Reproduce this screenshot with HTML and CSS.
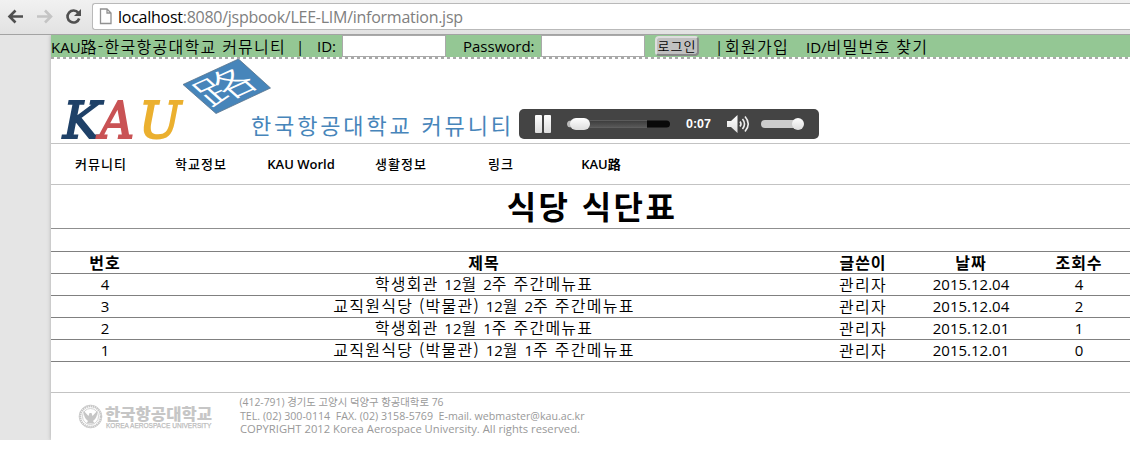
FILE: index.html
```html
<!DOCTYPE html>
<html lang="ko">
<head>
<meta charset="utf-8">
<title>KAU路</title>
<link rel="stylesheet" href="styles.css">
</head>
<body>
<div class="chrome">
  <svg class="chrome-icons" width="92" height="34" viewBox="0 0 92 34">
    <g fill="none" stroke-width="2.6">
      <path d="M23 16.5H10M15.5 10.5L9.5 16.5L15.5 22.5" stroke="#505050"/>
      <path d="M37 16.500H50M45 10.500L51 16.500L45 22.500" stroke="#c4c4c4"/>
      <path d="M78.300 12.900A6 6 0 1 0 79.200 18.500" stroke="#505050"/>
    </g>
    <path d="M81 9V16H74z" fill="#505050"/>
  </svg>
  <div class="omnibox">
    <svg width="14" height="17" viewBox="0 0 14 17"><path d="M1.500 1H8L12 5V15.500H1.500zM8 1V5H12" fill="#fdfdfd" stroke="#919191" stroke-width="1.300"/></svg>
    <span class="url"><b>localhost</b>:8080/jspbook/LEE-LIM/information.jsp</span>
  </div>
</div>
<div class="viewport">
  <div class="page">
    <div class="login">
      <span>KAU<i class="ko">路-한국항공대학교 커뮤니티</i></span>
      <span>|</span><span>ID:</span><input type="text">
      <span>Password:</span><input type="password">
      <button class="ko">로그인</button>
      <span>|</span><span class="ko">회원가입</span><span>ID/<i class="ko">비밀번호 찾기</i></span>
    </div>
    <header class="banner">
      <svg class="logo" width="468" height="84" viewBox="51 59 468 84">
        <g class="kau">
          <text x="63" y="138" textLength="38" lengthAdjust="spacingAndGlyphs" fill="#1f4168" stroke="#1f4168">K</text>
          <text x="100" y="138" textLength="34" lengthAdjust="spacingAndGlyphs" fill="#c95355" stroke="#c95355">A</text>
          <text x="139" y="138" textLength="42" lengthAdjust="spacingAndGlyphs" fill="#ebb02f" stroke="#ebb02f">U</text>
        </g>
        <path d="M183 84.500L238.500 59L270.500 88L216 113.500z" fill="#4785ba" stroke="#59748c" stroke-width=".8"/>
        <text class="road" transform="matrix(1.25 -.568 .74 .66 180 84.500)" x="2" y="37.500">路</text>
        <text class="tagline" x="251" y="134" textLength="260" lengthAdjust="spacing">한국항공대학교 커뮤니티</text>
      </svg>
      <svg class="player" width="300" height="30" viewBox="0 0 300 30">
        <defs>
          <linearGradient id="knob" x2="0" y2="1"><stop stop-color="#fff"/><stop offset="1" stop-color="#ddd"/></linearGradient>
          <linearGradient id="track" x2="0" y2="1"><stop stop-color="#3c3c3c"/><stop offset="1" stop-color="#595959"/></linearGradient>
        </defs>
        <rect width="300" height="30" rx="5" fill="#444"/>
        <g fill="url(#knob)"><rect x="16" y="6" width="7" height="18" rx="1"/><rect x="25" y="6" width="7" height="18" rx="1"/></g>
        <rect x="48" y="11.500" width="103" height="7" rx="3.500" fill="#090909"/>
        <path d="M60 11.500H128V18.500H60z" fill="url(#track)"/>
        <path d="M60 11.500H128M60 18.500H128" stroke="#666" stroke-width=".8"/>
        <rect x="48" y="11.500" width="20" height="7" rx="3.500" fill="#bbb"/>
        <rect x="51" y="9" width="20" height="12" rx="6" fill="url(#knob)"/>
        <text class="time" x="167" y="19" textLength="25" lengthAdjust="spacingAndGlyphs">0:07</text>
        <path d="M208 12H212L218.500 6V24L212 18H208z" fill="url(#knob)"/>
        <path d="M221 12.500Q223 15 221 17.500M223.500 10Q227.500 15 223.500 20M226 7.500Q232.500 15 226 22.500" fill="none" stroke="#eee" stroke-width="1.600"/>
        <rect x="242" y="11" width="42" height="8" rx="4" fill="#ccc"/>
        <circle cx="279" cy="15" r="6" fill="url(#knob)"/>
      </svg>
    </header>
    <nav class="menu">
      <a class="ko">커뮤니티</a><a class="ko">학교정보</a><a>KAU World</a><a class="ko">생활정보</a><a class="ko">링크</a><a>KAU路</a>
    </nav>
    <h1>식당 식단표</h1>
    <table class="board">
      <thead>
        <tr><th class="c-sm">번호</th><th>제목</th><th class="c-sm">글쓴이</th><th class="c-sm">날짜</th><th class="c-sm">조회수</th></tr>
      </thead>
      <tbody>
        <tr><td>4</td><td><i class="ko">학생회관 </i>12<i class="ko">월 </i>2<i class="ko">주 주간메뉴표</i></td><td class="ko">관리자</td><td>2015.12.04</td><td>4</td></tr>
        <tr><td>3</td><td><i class="ko">교직원식당 (박물관) </i>12<i class="ko">월 </i>2<i class="ko">주 주간메뉴표</i></td><td class="ko">관리자</td><td>2015.12.04</td><td>2</td></tr>
        <tr><td>2</td><td><i class="ko">학생회관 </i>12<i class="ko">월 </i>1<i class="ko">주 주간메뉴표</i></td><td class="ko">관리자</td><td>2015.12.01</td><td>1</td></tr>
        <tr><td>1</td><td><i class="ko">교직원식당 (박물관) </i>12<i class="ko">월 </i>1<i class="ko">주 주간메뉴표</i></td><td class="ko">관리자</td><td>2015.12.01</td><td>0</td></tr>
      </tbody>
    </table>
    <footer class="footer">
      <svg width="560" height="47" viewBox="51 393 560 47">
        <g fill="none" stroke="#c6c6c6">
          <circle cx="90.500" cy="416.500" r="10.300" stroke-width="2.200" stroke-dasharray="1.500 .6"/>
          <circle cx="90.500" cy="416.500" r="11.400" stroke-width=".7"/>
          <circle cx="90.500" cy="416.500" r="8" stroke-width=".8"/>
        </g>
        <path d="M83.500 410.500Q83.500 418 88 421L86.500 423.500H94.500L93 421Q97.500 418 97.500 410.500L92.500 416L91.500 413H89.500L88.500 416z" fill="#c6c6c6"/>
        <text class="univ" x="105" y="419.500" textLength="107" lengthAdjust="spacingAndGlyphs">한국항공대학교</text>
        <text class="univ-en" x="106" y="428" textLength="105.500" lengthAdjust="spacingAndGlyphs">KOREA AEROSPACE UNIVERSITY</text>
        <g class="address">
          <text x="239.500" y="405.500" textLength="204" lengthAdjust="spacingAndGlyphs">(412-791) 경기도 고양시 덕양구 항공대학로 76</text>
          <text x="240" y="419.500" textLength="344.500" lengthAdjust="spacingAndGlyphs" xml:space="preserve">TEL. (02) 300-0114  FAX. (02) 3158-5769  E-mail. webmaster@kau.ac.kr</text>
          <text x="240" y="432.500" textLength="340" lengthAdjust="spacingAndGlyphs">COPYRIGHT 2012 Korea Aerospace University. All rights reserved.</text>
        </g>
      </svg>
    </footer>
  </div>
</div>
</body>
</html>
```
FILE: styles.css
```css
* { box-sizing: border-box; }
body {
  margin: 0;
  height: 460px;
  overflow: hidden;
  background: #fff;
  color: #000;
  font: 15px/20px "Open Sans", "Noto Sans CJK KR", sans-serif;
}
i { font-style: normal; }
.ko {
  font-family: "Noto Sans CJK KR", sans-serif;
  font-size: 16px;
  font-weight: 350;
  letter-spacing: 1.25px;
}

/* browser toolbar */
.chrome {
  display: flex;
  height: 35px;
  background: linear-gradient(#f1f1f1, #e2e2e2);
  border-bottom: 1px solid #a3a3a3;
}
.omnibox {
  flex: 1;
  display: flex;
  align-items: center;
  gap: 5px;
  height: 27px;
  margin-top: 3px;
  padding-left: 6px;
  background: #fff;
  border: 1px solid #b9b9b9;
  border-right: 0;
  border-radius: 3px 0 0 3px;
}
.url { color: #808080; white-space: nowrap; font-size: 16px; letter-spacing: -.26px; }
.url b { color: #000; font-weight: 400; }

.viewport { height: 405px; padding-left: 51px; background: #e5e5e5; overflow: hidden; }
.page { width: 1082px; height: 405px; background: #fff; box-shadow: 0 0 4px #aaa; }

/* login strip */
.login {
  display: grid;
  grid-template-columns: 245px 21px 25px 121px 78px 114px 60px 10px 81px auto;
  height: 24px;
  padding-bottom: 2px;
  background:
    repeating-linear-gradient(90deg, #a9a9a9 0 3px, #fff 3px 6px) bottom / 100% 2px no-repeat,
    #94c794;
  line-height: 22px;
  white-space: nowrap;
}
.login input { width: 104px; height: 22px; padding: 0; border: 1px solid #a9a9a9; background: #fff; }
.login button {
  width: 44px;
  height: 20px;
  margin-top: 1px;
  padding: 0;
  border: 2px outset #ddd;
  border-radius: 4px;
  background: #c0c0c0;
  color: #000;
  font-size: 13px;
  line-height: 16px;
  letter-spacing: 1px;
}

/* logo and audio player */
.banner { display: flex; height: 85px; border-bottom: 1px solid #c3c3c3; }
.player { margin-top: 50px; }
.kau { font: italic 51px "DejaVu Serif", serif; stroke-width: 2px; }
.road { font: 300 40px "Noto Sans CJK KR", sans-serif; fill: #fff; }
.tagline { font: 400 22px "Noto Sans CJK KR", sans-serif; fill: #4785ba; }
.time { font: bold 13px "Liberation Sans", sans-serif; fill: #fff; }

.menu { display: flex; height: 41px; border-bottom: 1px solid #c3c3c3; }
.menu a { width: 100px; text-align: center; font-size: 13px; font-weight: 600; line-height: 40px; }
.menu .ko { font-weight: 500; letter-spacing: 1px; }

h1 {
  height: 44px;
  margin: 0;
  border-bottom: 1px solid #8f8f8f;
  font: 700 32px/40px "Noto Sans CJK KR", sans-serif;
  letter-spacing: 2.4px;
  text-align: center;
}

/* notice board */
.board {
  width: 1082px;
  margin-top: 22px;
  table-layout: fixed;
  border-collapse: collapse;
  border-top: 1px solid #808080;
  text-align: center;
}
.board tr { height: 22px; border-bottom: 1px solid #808080; }
.board th, .board td { height: 22px; padding: 0; line-height: 19px; }
.board i { line-height: 1; }
.board th { font: 700 16px/19px "Noto Sans CJK KR", sans-serif; letter-spacing: 1px; }
.board .c-sm { width: 108px; }

.footer { height: 48px; margin-top: 30px; border-top: 1px solid #c3c3c3; }
.univ { font: 900 16px "Noto Sans CJK KR", sans-serif; fill: #c6c6c6; }
.univ-en { font: 7.5px "Liberation Sans", sans-serif; fill: #bbb; stroke: #bbb; stroke-width: .25px; }
.address { font: 10.500px "Open Sans", "Noto Sans CJK KR", sans-serif; fill: #999; }
```
